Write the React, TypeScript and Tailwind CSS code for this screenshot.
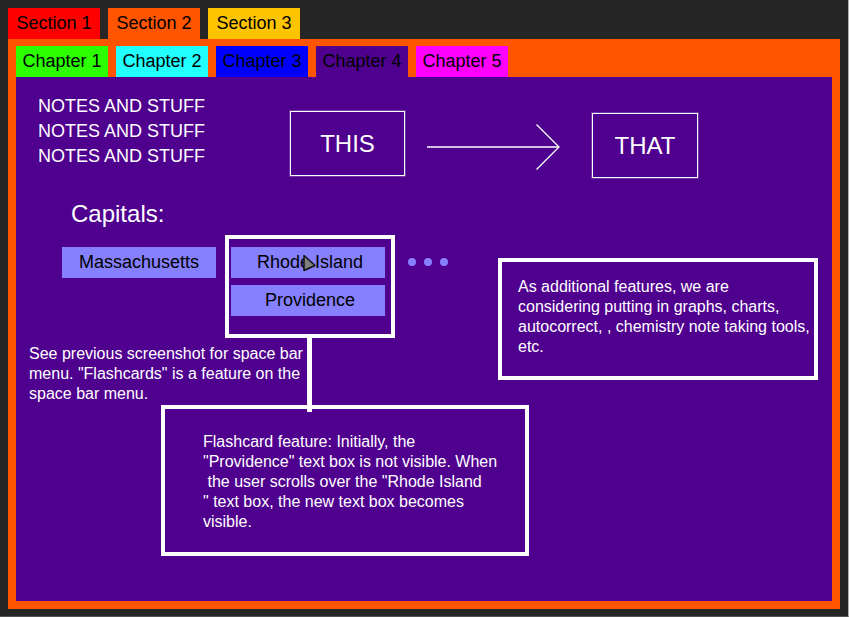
import React from "react";

const sections = [
  { name: "Section 1", color: "bg-[#ff0000]" },
  { name: "Section 2", color: "bg-[#ff5500]" },
  { name: "Section 3", color: "bg-[#ffc400]" },
];

const chapters = [
  { name: "Chapter 1", color: "bg-[#2bff00]" },
  { name: "Chapter 2", color: "bg-[#22ffff]" },
  { name: "Chapter 3", color: "bg-[#0000ff]" },
  { name: "Chapter 4", color: "bg-[#4f008f]" },
  { name: "Chapter 5", color: "bg-[#ff00ff]" },
];

function Tabs({ label, items }: { label: string; items: { name: string; color: string }[] }) {
  return (
    <nav aria-label={label} className="flex gap-2">
      {items.map((item) => (
        <button
          key={item.name}
          type="button"
          className={`h-[31px] w-[92px] whitespace-nowrap text-center text-[18px] leading-[31px] text-black ${item.color}`}
        >
          {item.name}
        </button>
      ))}
    </nav>
  );
}

function Card({ children }: { children: React.ReactNode }) {
  return (
    <button
      type="button"
      className="relative h-[31px] w-[154px] shrink-0 bg-[#8680ff] text-center text-[18px] leading-[31px] text-black"
    >
      {children}
    </button>
  );
}

function Pointer() {
  return (
    <svg className="absolute left-[71px] top-[6px]" width="16" height="20" viewBox="0 0 16 20" aria-hidden="true">
      <path d="M2 2.5V17.5L13 12.5Z" fill="#808080" stroke="#111" strokeWidth="1.5" strokeLinejoin="round" />
    </svg>
  );
}

export default function App() {
  return (
    <div className="flex min-h-screen flex-col border-b border-r border-b-[#555555] border-r-[#b0b0b0] bg-[#262626] p-2 pb-[7px] font-['Liberation_Sans',Arial,sans-serif]">
      <Tabs label="Sections" items={sections} />
      <div className="flex flex-1 flex-col bg-[#ff5500] px-2 pb-2 pt-[7px]">
        <Tabs label="Chapters" items={chapters} />
        <main className="flex-1 bg-[#4f008f] pt-[17px] text-white">
          <div className="flex items-start pl-[22px]">
            <div className="w-[252px] shrink-0 text-[18px] leading-[25px]">
              <p>NOTES AND STUFF</p>
              <p>NOTES AND STUFF</p>
              <p>NOTES AND STUFF</p>
            </div>
            <div className="flex pt-[17px] text-[24px]">
              <div className="flex h-[65px] w-[115px] items-center justify-center self-start border border-white shadow-[0_0_0_1px_rgba(255,255,255,0.2)]">
                THIS
              </div>
              <svg className="mx-[22px] h-[67px] w-[143px]" viewBox="0 0 143 67" fill="none" stroke="white" aria-hidden="true">
                <path d="M0 36H132" strokeWidth="1.5" />
                <path d="M109.500 13.500L132 36L109.500 58.500" strokeWidth="1.300" />
              </svg>
              <div className="flex h-[65px] w-[106px] items-center justify-center self-end border border-white shadow-[0_0_0_1px_rgba(255,255,255,0.2)]">
                THAT
              </div>
            </div>
          </div>

          <h1 className="mt-[22px] pl-[55px] text-[24px] leading-7">Capitals:</h1>

          <div className="mt-[7px] flex items-start pl-[13px] pr-[14px]">
            <div className="w-[420px] shrink-0">
              <div className="flex items-start pl-[33px]">
                <div className="pt-3">
                  <Card>Massachusetts</Card>
                </div>
                <div className="relative ml-[9px] flex h-[103px] w-[170px] flex-col gap-[7px] border-4 border-white pl-[2px] pt-2">
                  <Card>
                    <span className="pl-1">Rhode Island</span>
                    <Pointer />
                  </Card>
                  <Card>
                    <span className="pl-1">Providence</span>
                  </Card>
                  <div className="absolute left-[78px] top-full h-[78px] w-[5px] bg-white" />
                </div>
                <div className="ml-[13px] flex gap-2 pt-[23px]">
                  <span className="size-2 rounded-full bg-[#8680ff]" />
                  <span className="size-2 rounded-full bg-[#8680ff]" />
                  <span className="size-2 rounded-full bg-[#8680ff]" />
                </div>
              </div>
              <p className="w-[278px] pt-[6px] text-[16px] leading-5">
                See previous screenshot for space bar menu. "Flashcards" is a feature on the space bar menu.
              </p>
            </div>
            <aside className="ml-[49px] mt-[23px] min-w-0 flex-1 border-4 border-white pb-[19px] pl-4 pt-[15px] text-[16px] leading-5">
              As additional features, we are considering putting in graphs, charts, autocorrect, , chemistry note
              taking tools, etc.
            </aside>
          </div>

          <p className="mb-4 ml-[145px] mt-px w-[368px] whitespace-pre border-4 border-white pb-5 pl-[38px] pt-[23px] text-[16px] leading-5">
            {'Flashcard feature: Initially, the\n"Providence" text box is not visible. When\n the user scrolls over the "Rhode Island\n" text box, the new text box becomes\nvisible.'}
          </p>
        </main>
      </div>
    </div>
  );
}
